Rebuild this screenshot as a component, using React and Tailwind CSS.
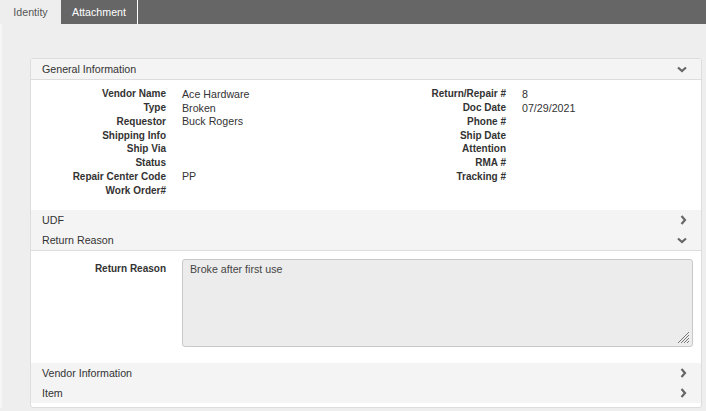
import React from "react";

const FONT = { fontFamily: '"Liberation Sans", Arial, sans-serif' };

function ChevronDown() {
  return (
    <svg width="10" height="7" viewBox="0 0 10 7" className="shrink-0">
      <polyline points="1,1.5 5,5 9,1.5" fill="none" stroke="#666" strokeWidth="2.2" />
    </svg>
  );
}

function ChevronRight() {
  return (
    <svg width="7" height="10" viewBox="0 0 7 10" className="shrink-0">
      <polyline points="1.5,1 5,5 1.5,9" fill="none" stroke="#666" strokeWidth="2.2" />
    </svg>
  );
}

function SectionHeader({ title, open, border }) {
  return (
    <div
      className={`flex h-[20px] items-center justify-between bg-[#f4f4f4] pl-[11px] pr-[14px] text-[10.67px] text-[#333] ${
        border ? "box-content border-b border-[#ddd]" : ""
      }`}
    >
      <span>{title}</span>
      {open ? <ChevronDown /> : <ChevronRight />}
    </div>
  );
}

const LEFT = [
  ["Vendor Name", "Ace Hardware"],
  ["Type", "Broken"],
  ["Requestor", "Buck Rogers"],
  ["Shipping Info", ""],
  ["Ship Via", ""],
  ["Status", ""],
  ["Repair Center Code", "PP"],
  ["Work Order#", ""],
];

const RIGHT = [
  ["Return/Repair #", "8"],
  ["Doc Date", "07/29/2021"],
  ["Phone #", ""],
  ["Ship Date", ""],
  ["Attention", ""],
  ["RMA #", ""],
  ["Tracking #", ""],
];

function Field({ label, value, labelWidth }) {
  return (
    <div className="flex h-[13.75px] items-center">
      <div className={`${labelWidth} shrink-0 text-right text-[10px] font-bold text-[#333]`}>{label}</div>
      <div className="ml-[16px] text-[10.67px] text-[#333]">{value}</div>
    </div>
  );
}

export default function App() {
  return (
    <div className="min-h-screen bg-[#eee]" style={FONT}>
      <div className="flex h-[24px] bg-[#666] text-[10.67px]">
        <div className="flex w-[61px] items-center justify-center bg-[#eee] text-[#555]">Identity</div>
        <div className="flex w-[77px] items-center justify-center border-r border-white text-white">Attachment</div>
      </div>

      <div className="border-l-2 border-[#f6f6f6] pt-[34px]">
        <div className="ml-[28px] mr-[4px] overflow-hidden rounded-[3px] border border-[#ddd] bg-white">
          <SectionHeader title="General Information" open border />
          <div className="flex h-[130px] pt-[7px]">
            <div className="w-[335px]">
              {LEFT.map(([l, v]) => (
                <Field key={l} label={l} value={v} labelWidth="w-[135px]" />
              ))}
            </div>
            <div className="flex-1">
              {RIGHT.map(([l, v]) => (
                <Field key={l} label={l} value={v} labelWidth="w-[140px]" />
              ))}
            </div>
          </div>

          <SectionHeader title="UDF" />
          <SectionHeader title="Return Reason" open border />
          <div className="flex pt-[8px] pb-[16px]">
            <div className="w-[135px] shrink-0 pt-[2px] text-right text-[10px] font-bold text-[#333]">Return Reason</div>
            <div className="relative ml-[16px] mr-[8px] h-[88px] flex-1 rounded-[3px] border border-[#c8c8c8] bg-[#ececec] px-[7px] pt-[1px] text-[10.67px] text-[#444]">
              Broke after first use
              <svg width="13" height="13" viewBox="0 0 13 13" className="absolute bottom-[2px] right-[2px]">
                <line x1="12" y1="1" x2="1" y2="12" stroke="#777" strokeWidth="1" />
                <line x1="12" y1="4" x2="4" y2="12" stroke="#777" strokeWidth="1" />
                <line x1="12" y1="7" x2="7" y2="12" stroke="#777" strokeWidth="1" />
                <line x1="12" y1="10" x2="10" y2="12" stroke="#777" strokeWidth="1" />
              </svg>
            </div>
          </div>

          <SectionHeader title="Vendor Information" />
          <SectionHeader title="Item" />
          <div className="h-[4px]" />
        </div>
      </div>
    </div>
  );
}
